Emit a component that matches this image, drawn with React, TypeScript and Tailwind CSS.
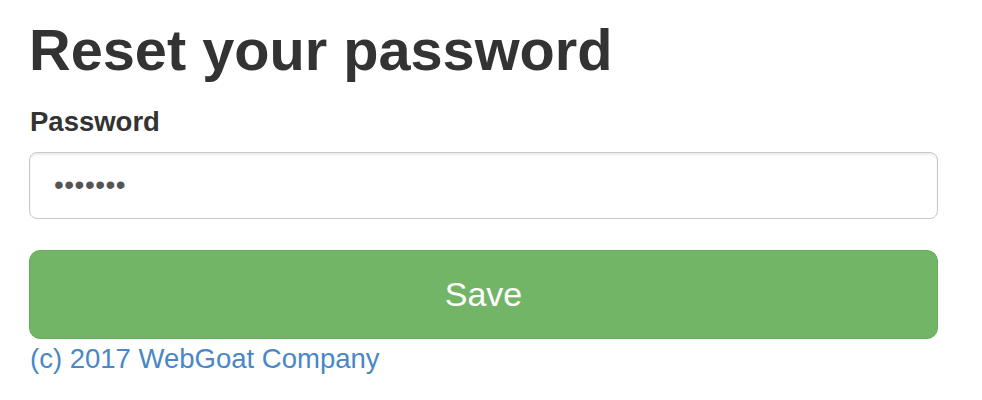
import React from 'react'

// Reset password form (WebGoat)
export default function App() {
  return (
    <div className="min-h-[400px] w-[982px] bg-white font-['Liberation_Sans',Arial,sans-serif] text-[#333]">
      <div className="ml-[29px] w-[909px]">
        <h1 className="pt-[19px] text-[57.7px] font-bold leading-[1.1] text-[#333]">
          Reset your password
        </h1>

        <form onSubmit={(e) => e.preventDefault()}>
          <div className="mt-[20px]">
            <label className="block pl-px text-[27.5px] font-bold leading-[1.43]">Password</label>
            <input
              type="password"
              defaultValue="1234567"
              className="mt-[10px] block h-[67px] w-full rounded-[8px] border-[1.5px] border-[#c8c8c8] px-[24px] text-[28px] tracking-[0.5px] text-[#555] shadow-[inset_0_2px_2px_rgba(0,0,0,0.075)] outline-none"
            />
          </div>

          <button
            type="submit"
            className="mt-[31px] flex h-[89px] w-full items-center justify-center rounded-[11px] border-[1.5px] border-[#68ad5c] bg-[#73b567] text-[34px] leading-none text-white"
          >
            Save
          </button>
        </form>

        <a href="#" className="block pl-px text-[27.5px] leading-[1.43] text-[#4a87c6]">
          (c) 2017 WebGoat Company
        </a>
      </div>
    </div>
  )
}
